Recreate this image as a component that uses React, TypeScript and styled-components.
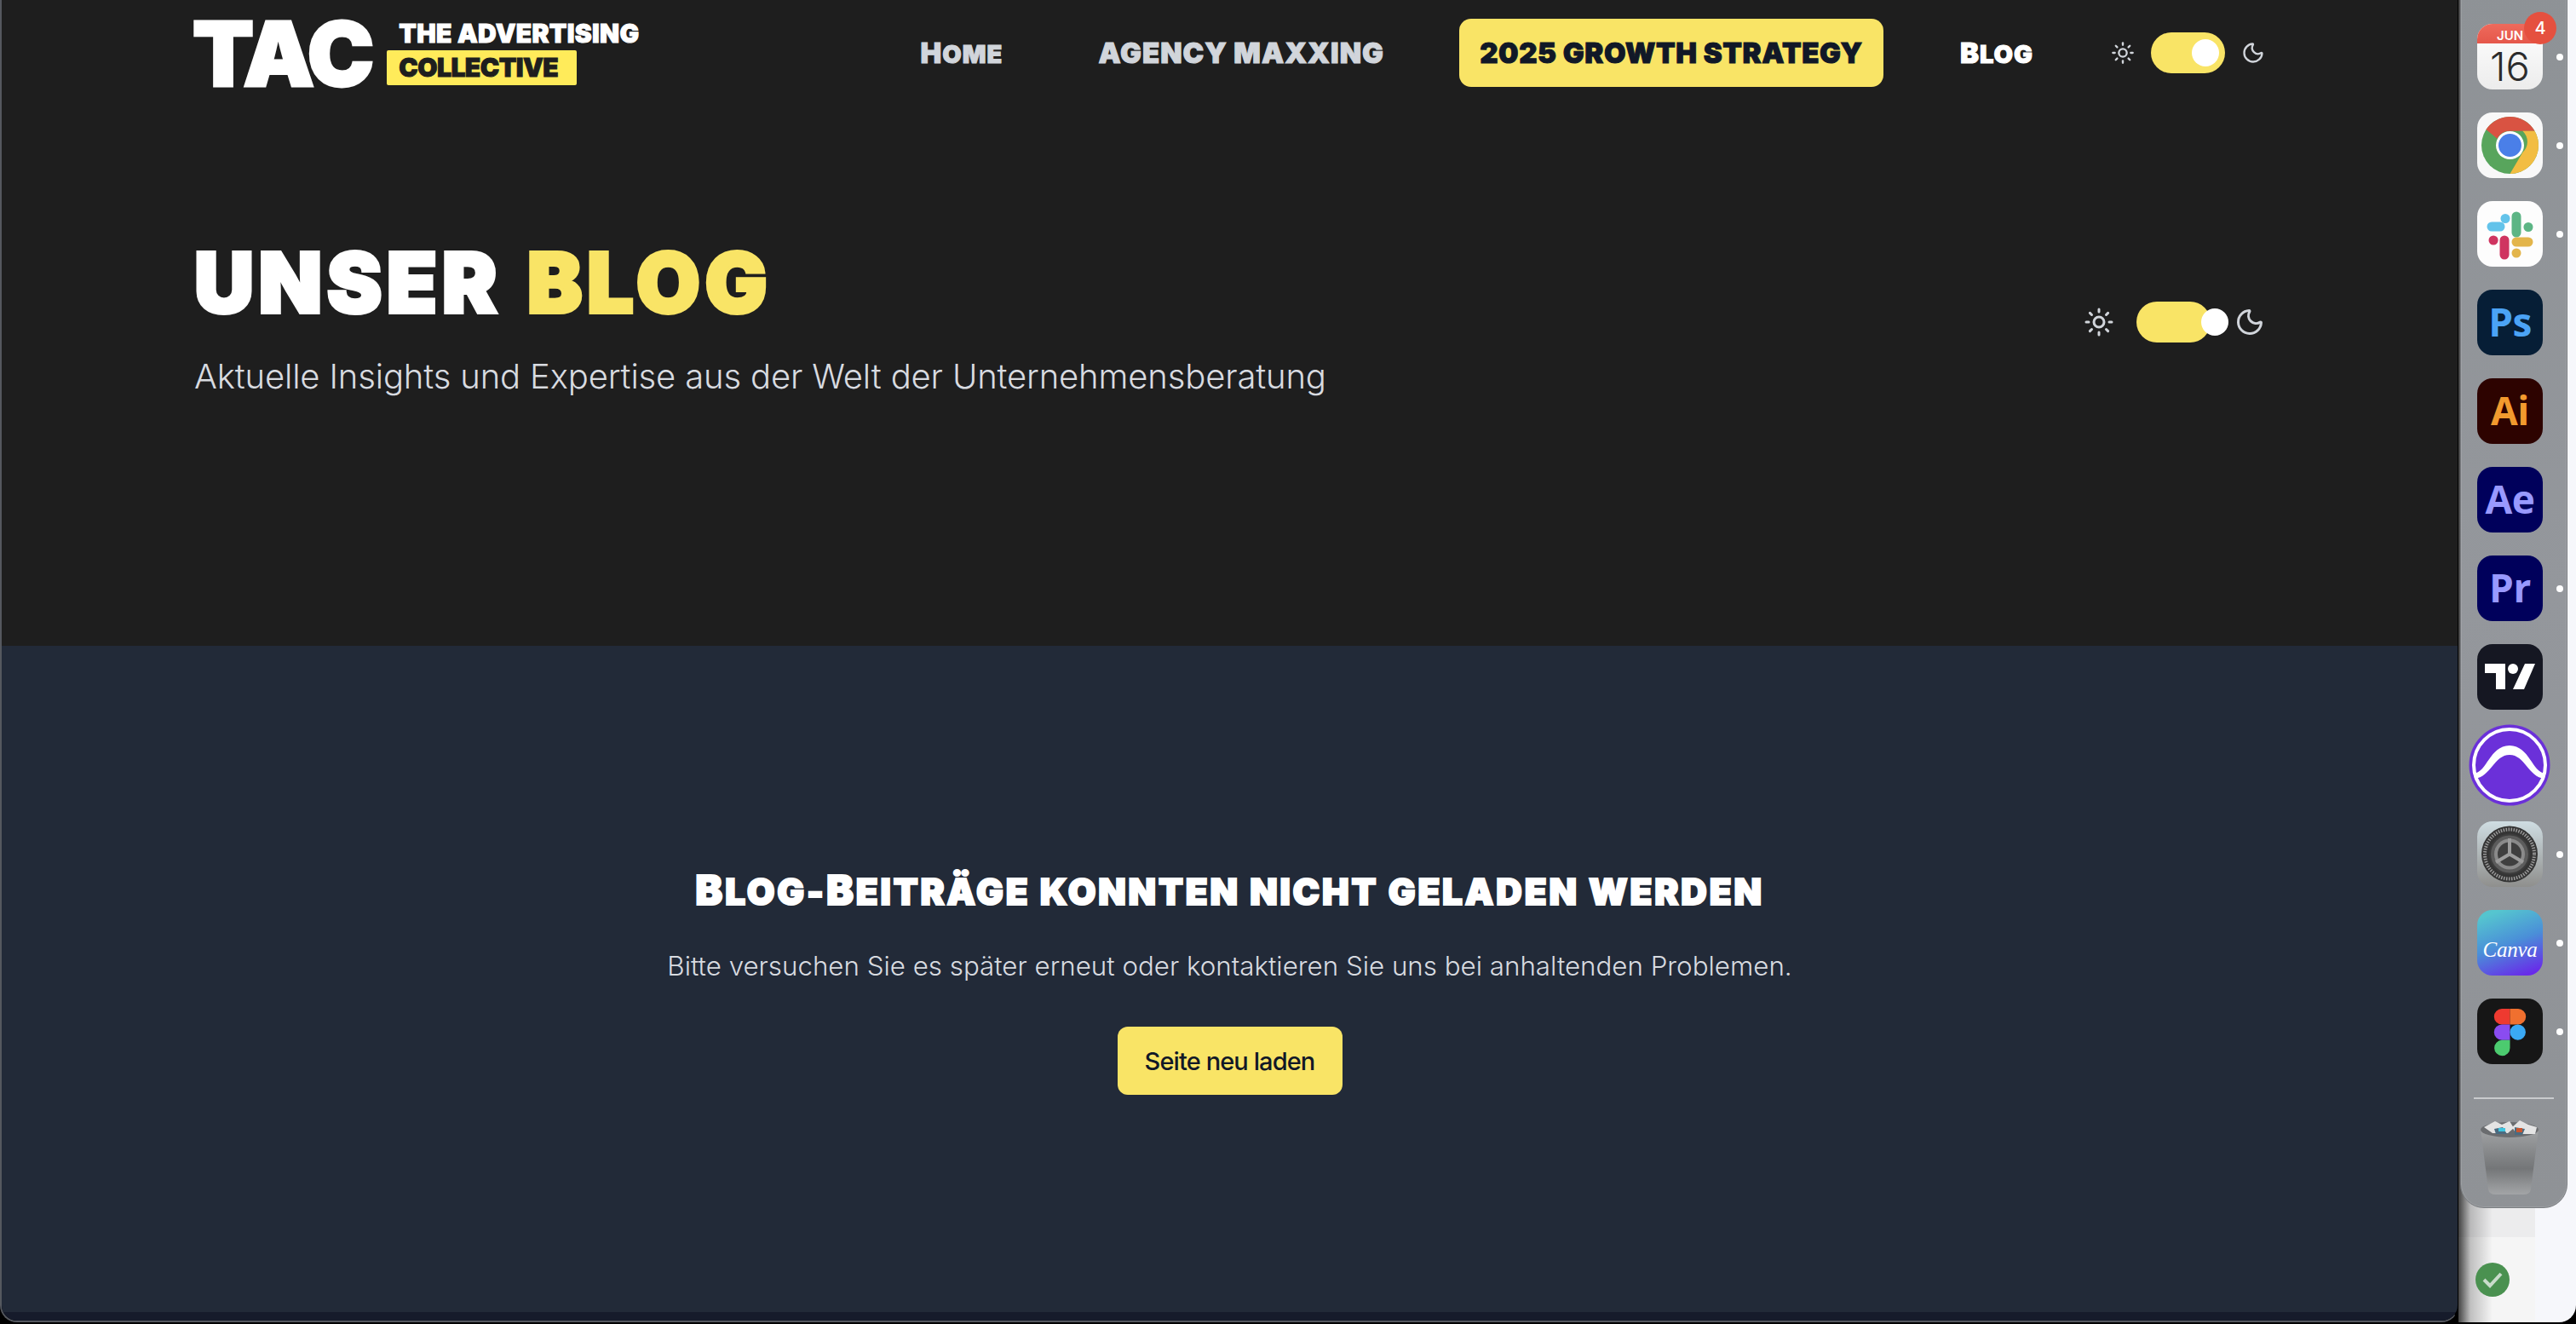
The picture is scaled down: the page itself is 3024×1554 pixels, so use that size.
import React from 'react';
import styled, { createGlobalStyle } from 'styled-components';
import { Sun, Moon } from 'lucide-react';

const heavy = `"Inter", "Liberation Sans", sans-serif`;
const yellow = '#f9e466';

const Global = createGlobalStyle`
  html, body { margin: 0; padding: 0; background: #000; }
  body { font-family: "Inter", "Liberation Sans", sans-serif; overflow: hidden; }
`;

const Screen = styled.div`
  width: 3024px;
  height: 1554px;
  display: flex;
  align-items: flex-start;
  position: relative;
  overflow: hidden;
  background: #000;
`;

const Browser = styled.div`
  width: 2886px;
  height: 1552px;
  flex: none;
  display: flex;
  flex-direction: column;
  border-radius: 0 0 20px 20px;
  border: 2px solid #55585f;
  border-top: 0;
  border-right: 1px solid #000;
  box-sizing: border-box;
  overflow: hidden;
`;

const Desktop = styled.div`
  flex: 1;
  height: 1552px;
  border-radius: 0 0 20px 0;
  background:
    linear-gradient(90deg, rgba(0, 0, 0, 0.72) 0, rgba(0, 0, 0, 0.22) 14px, rgba(0, 0, 0, 0) 40px),
    linear-gradient(90deg, transparent 90px, #f6f7fb 90px),
    linear-gradient(180deg, #ececed 0 1452px, #f5f5f5 1452px);
`;

const Hero = styled.section`
  height: 758px;
  flex: none;
  background: #1e1e1e;
  box-sizing: border-box;
  padding: 0 226px 0 226px;
  display: flex;
  flex-direction: column;
`;

const Nav = styled.nav`
  height: 124px;
  flex: none;
  display: flex;
  align-items: center;
  justify-content: space-between;
`;

const Logo = styled.div`
  display: flex;
  align-items: center;
  gap: 18px;
  margin-left: -2px;
`;

const LogoMark = styled.span`
  font: 900 105px/1 ${heavy};
  color: #fff;
  letter-spacing: -3px;
  -webkit-text-stroke: 3px #fff;
`;

const LogoText = styled.div`
  display: flex;
  flex-direction: column;
  align-items: flex-start;
  gap: 5px;
`;

const LogoLine = styled.span`
  font: 900 30px/1 ${heavy};
  color: #fff;
  padding-left: 14px;
  letter-spacing: 0.3px;
  -webkit-text-stroke: 1px #fff;
`;

const LogoTag = styled.span`
  font: 900 30px/41px ${heavy};
  color: #1e1e1e;
  background: #ffeb5a;
  border-radius: 2px;
  width: 223px;
  height: 41px;
  padding-left: 14px;
  box-sizing: border-box;
  letter-spacing: -0.5px;
  -webkit-text-stroke: 1px #1e1e1e;
`;

const Links = styled.div`
  display: flex;
  align-items: center;
`;

const NavLink = styled.a<{ $color: string; $gap: number }>`
  font: 900 33px/1 ${heavy};
  color: ${(p) => p.$color};
  margin-right: ${(p) => p.$gap}px;
  letter-spacing: 1px;
  white-space: nowrap;
  -webkit-text-stroke: 1px currentColor;
`;

const Lower = styled.span`
  font-size: 0.88em;
`;

const NavCta = styled.a`
  font: 900 33px/80px ${heavy};
  height: 80px;
  width: 498px;
  text-align: center;
  background: ${yellow};
  color: #111827;
  border-radius: 14px;
  margin-right: 90px;
  white-space: nowrap;
  letter-spacing: 0.6px;
  -webkit-text-stroke: 1px #111827;
`;

const Toggle = styled.div`
  display: flex;
  align-items: center;
`;

const HeroToggle = styled(Toggle)`
  margin-top: 11px;
`;

const Track = styled.div<{ $over?: boolean }>`
  width: 87px;
  height: 48px;
  border-radius: 24px;
  background: ${yellow};
  position: relative;
  margin: 0 ${(p) => (p.$over ? 28 : 19)}px 0 ${(p) => (p.$over ? 26 : 19)}px;
`;

const Knob = styled.div<{ $left: number }>`
  position: absolute;
  top: 8px;
  left: ${(p) => p.$left}px;
  width: 32px;
  height: 32px;
  border-radius: 50%;
  background: #fff;
`;

const HeroBody = styled.div`
  display: flex;
  align-items: center;
  justify-content: space-between;
  margin-top: 159px;
`;

const Title = styled.h1`
  font: 900 97px/1 ${heavy};
  margin: 0;
  color: #fff;
  letter-spacing: 5.500px;
  word-spacing: 5px;
  -webkit-text-stroke: 4px currentColor;
`;

const Accent = styled.span`
  color: ${yellow};
`;

const Sub = styled.p`
  font: 300 40px/1 ${heavy};
  color: #d8dbe0;
  margin: 42px 0 0;
  letter-spacing: -0.15px;
`;

const ErrorPanel = styled.section`
  flex: 1;
  background: #222a38;
  display: flex;
  flex-direction: column;
  align-items: center;
  padding-top: 263px;
`;

const PanelFoot = styled.div`
  height: 10px;
  flex: none;
  background: #161b2b;
`;

const ErrorTitle = styled.h2`
  font: 900 48px/1 ${heavy};
  color: #fff;
  margin: 0;
  white-space: nowrap;
  letter-spacing: 2.850px;
  -webkit-text-stroke: 2px #fff;
`;

const ErrorText = styled.p`
  font: 300 31.3px/1 ${heavy};
  color: #d8dbe0;
  margin: 50px 0 0;
`;

const Reload = styled.button`
  margin-top: 55px;
  width: 264px;
  height: 80px;
  border: 0;
  border-radius: 12px;
  background: ${yellow};
  color: #111827;
  font: 500 29px/1 ${heavy};
  letter-spacing: -0.9px;
`;

const Dock = styled.aside`
  position: absolute;
  left: 2888px;
  top: -20px;
  width: 126px;
  height: 1438px;
  box-sizing: border-box;
  padding-top: 47px;
  border-radius: 0 0 28px 28px;
  background: linear-gradient(180deg, #8e9296, #94979c 50%, #8f9296);
  border: 1px solid #7a7d81;
  box-shadow: inset 0 0 0 1px rgba(255, 255, 255, 0.12);
  display: flex;
  flex-direction: column;
  align-items: flex-start;
`;

const Slot = styled.div`
  width: 77px;
  height: 77px;
  margin: 0 0 27px 19px;
  flex: none;
  position: relative;
`;

const Tile = styled.div<{ $bg: string; $fg?: string }>`
  width: 77px;
  height: 77px;
  border-radius: 18px;
  background: ${(p) => p.$bg};
  color: ${(p) => p.$fg || '#fff'};
  font: 700 46px/75px "Open Sans", sans-serif;
  text-align: center;
  overflow: hidden;
  letter-spacing: -0.5px;
`;

const Dot = styled.i`
  position: absolute;
  left: 93px;
  top: 35px;
  width: 8px;
  height: 8px;
  border-radius: 50%;
  background: #fff;
`;

const Badge = styled.span`
  position: absolute;
  left: 55px;
  top: -14px;
  width: 38px;
  height: 38px;
  border-radius: 50%;
  background: #e5503f;
  color: #fff;
  font: 500 20px/38px "Inter", sans-serif;
  text-align: center;
`;

const CalHead = styled.div`
  height: 23px;
  background: linear-gradient(#ee6a5c, #e5574a);
  color: #fff;
  font: 600 15px/27px "Inter", sans-serif;
  letter-spacing: 0;
  overflow: hidden;
`;

const CalDay = styled.div`
  color: #2b2b2b;
  font: 300 47px/54px "Inter", sans-serif;
  letter-spacing: 0;
`;

const CanvaWord = styled.span`
  font: italic 400 25px/74px "Liberation Serif", serif;
  letter-spacing: -0.3px;
`;

const DockRule = styled.div`
  width: 94px;
  height: 2px;
  background: #c9cbcd;
  margin: 12px 0 24px 15px;
`;

const TrashSlot = styled.div`
  margin-left: 23px;
  width: 68px;
  height: 89px;
`;

const Done = styled.div`
  position: absolute;
  left: 2906px;
  top: 1482px;
  width: 40px;
  height: 40px;
  border-radius: 50%;
  background: #4a9150;
  display: flex;
  align-items: center;
  justify-content: center;
`;

const ChromeIcon = () => (
  <svg viewBox="0 0 77 77" width="77" height="77">
    <circle cx="38.5" cy="38.5" r="33.5" fill="#58a55c" />
    <path d="M38.5 5a33.5 33.5 0 0 1 29 16.7H38.5a17 17 0 0 0-15 9L10.500 20A33.500 33.500 0 0 1 38.500 5z" fill="#d95342" />
    <path d="M67.500 21.700A33.500 33.500 0 0 1 38.500 72l14.800-25a17 17 0 0 0 0-25.300z" fill="#f2bd42" />
    <circle cx="38.500" cy="38.500" r="16.500" fill="#fff" />
    <circle cx="38.500" cy="38.500" r="13.500" fill="#4a7fe8" />
  </svg>
);

const SlackIcon = () => (
  <svg viewBox="0 0 77 77" width="77" height="77">
    <g fill="none" strokeLinecap="round" strokeWidth="11">
      <path d="M27 30H17" stroke="#63c3ea" />
      <path d="M33 20.500v.1" stroke="#63c3ea" />
      <path d="M46 18v19" stroke="#5cb585" />
      <path d="M60 30.500v.1" stroke="#5cb585" />
      <path d="M46 48h14" stroke="#e3b54b" />
      <path d="M46 61v.1" stroke="#e3b54b" />
      <path d="M32 46v17" stroke="#cf3460" />
      <path d="M19 46h.1" stroke="#cf3460" />
    </g>
  </svg>
);

const TradingViewIcon = () => (
  <svg viewBox="0 0 77 77" width="77" height="77">
    <path d="M9 23h24v30H22V34H9z" fill="#fff" />
    <circle cx="42" cy="29" r="6" fill="#fff" />
    <path d="M56 23h12L55 53H42z" fill="#fff" />
  </svg>
);

const ProToolsIcon = () => (
  <svg viewBox="0 0 96 96" width="96" height="96" style={{ position: 'absolute', left: -10, top: -10 }}>
    <circle cx="48" cy="48" r="47.500" fill="#6b30d9" />
    <circle cx="48" cy="48" r="42" fill="none" stroke="#fff" strokeWidth="4" />
    <path d="M6 58c16-2 18-32 42-33 24 1 26 31 42 33l-1 6C70 62 66 36 48 36 30 36 26 62 7 64z" fill="#fff" />
  </svg>
);

const SettingsIcon = () => (
  <svg viewBox="0 0 77 77" width="77" height="77">
    <defs>
      <linearGradient id="setBg" x1="0" y1="0" x2="0" y2="1">
        <stop offset="0" stopColor="#cfdde2" />
        <stop offset="1" stopColor="#8f8f8d" />
      </linearGradient>
    </defs>
    <rect width="77" height="77" rx="18" fill="url(#setBg)" />
    <circle cx="38" cy="38.500" r="33" fill="#343434" />
    <circle cx="38" cy="38.500" r="29" fill="none" stroke="#9a9a9a" strokeWidth="4" strokeDasharray="1.500 1.500" />
    <circle cx="38" cy="38.500" r="23" fill="#5c5c5c" stroke="#3c3c3c" strokeWidth="2" />
    <circle cx="38" cy="38.500" r="18" fill="#8a8a8a" />
    <circle cx="38" cy="38.500" r="14" fill="#3f3f3f" />
    <path d="M38 38.500V20M38 38.500L22 48M38 38.500L54 48" stroke="#9c9c9c" strokeWidth="4" />
  </svg>
);

const FigmaIcon = () => (
  <svg viewBox="0 0 77 77" width="77" height="77">
    <path d="M38.500 12H29a9.200 9.200 0 0 0 0 18.400h9.500z" fill="#ee3a30" />
    <path d="M38.500 12H48a9.200 9.200 0 0 1 0 18.400h-9.500z" fill="#f0702f" />
    <path d="M38.500 30.400H29a9.200 9.200 0 0 0 0 18.400h9.500z" fill="#8a4cf0" />
    <circle cx="47.700" cy="39.600" r="9.200" fill="#3aa9f5" />
    <path d="M38.500 48.800H29a9.200 9.200 0 1 0 9.500 9.200z" fill="#4ccb6f" />
  </svg>
);

const TrashIcon = () => (
  <svg viewBox="0 0 68 89" width="68" height="89">
    <defs>
      <linearGradient id="bin" x1="0" y1="0" x2="0" y2="1">
        <stop offset="0" stopColor="#a0a2a4" />
        <stop offset="0.6" stopColor="#747678" />
        <stop offset="1" stopColor="#a3a5a7" />
      </linearGradient>
    </defs>
    <path d="M0 12h68L59 82q-1 6-9 6H18q-8 0-9-6z" fill="url(#bin)" />
    <ellipse cx="34" cy="12" rx="34" ry="9" fill="#6a6c6f" />
    <path d="M4 9l13-7 8 4 9-4 5 8-7 6H14zM37 9l9-8 10 5 10 3-2 8H42z" fill="#e4e4e4" />
    <path d="M16 11l10-2 5 8H18zM40 9l12 2-3 7H40z" fill="#4b6b80" />
    <path d="M21 10h8v4h-8z" fill="#3fc5e0" />
    <path d="M42 10h7v5h-7z" fill="#c8552f" />
  </svg>
);

const apps: { key: string; dot?: boolean; node: React.ReactNode }[] = [
  { key: 'cal', dot: true, node: <Tile $bg="linear-gradient(#fff,#ececec)" $fg="#222"><CalHead>JUN</CalHead><CalDay>16</CalDay></Tile> },
  { key: 'chrome', dot: true, node: <Tile $bg="#f8f8f8"><ChromeIcon /></Tile> },
  { key: 'slack', dot: true, node: <Tile $bg="#fdfdfd"><SlackIcon /></Tile> },
  { key: 'ps', node: <Tile $bg="#061e36" $fg="#4ba3f5">Ps</Tile> },
  { key: 'ai', node: <Tile $bg="#2d0300" $fg="#f29a2e">Ai</Tile> },
  { key: 'ae', node: <Tile $bg="#00005b" $fg="#9999ff">Ae</Tile> },
  { key: 'pr', dot: true, node: <Tile $bg="#00005b" $fg="#9999ff">Pr</Tile> },
  { key: 'tv', node: <Tile $bg="#151722"><TradingViewIcon /></Tile> },
  { key: 'pt', node: <ProToolsIcon /> },
  { key: 'set', dot: true, node: <SettingsIcon /> },
  { key: 'canva', dot: true, node: <Tile $bg="linear-gradient(160deg,#55c5cf 10%,#4a8fd8 50%,#6a25ea 95%)"><CanvaWord>Canva</CanvaWord></Tile> },
  { key: 'figma', dot: true, node: <Tile $bg="#161616"><FigmaIcon /></Tile> },
];

export default function App() {
  return (
    <Screen>
      <Global />
      <Browser>
        <Hero>
          <Nav>
            <Logo>
              <LogoMark>TAC</LogoMark>
              <LogoText>
                <LogoLine>THE ADVERTISING</LogoLine>
                <LogoTag>COLLECTIVE</LogoTag>
              </LogoText>
            </Logo>
            <Links>
              <NavLink $color="#d1d5db" $gap={112}>H<Lower>OME</Lower></NavLink>
              <NavLink $color="#d1d5db" $gap={88}>AGENCY MAXXING</NavLink>
              <NavCta>2025 GROWTH STRATEGY</NavCta>
              <NavLink $color="#fff" $gap={91}>B<Lower>LOG</Lower></NavLink>
              <Toggle>
                <Sun size={28} color="#d1d5db" />
                <Track>
                  <Knob $left={48} />
                </Track>
                <Moon size={28} color="#d1d5db" />
              </Toggle>
            </Links>
          </Nav>
          <HeroBody>
            <div>
              <Title>UNSER <Accent>BLOG</Accent></Title>
              <Sub>Aktuelle Insights und Expertise aus der Welt der Unternehmensberatung</Sub>
            </div>
            <HeroToggle>
              <Sun size={36} color="#d1d5db" />
              <Track $over>
                <Knob $left={76} />
              </Track>
              <Moon size={36} color="#d1d5db" />
            </HeroToggle>
          </HeroBody>
        </Hero>
        <ErrorPanel>
          <ErrorTitle>B<Lower>LOG-</Lower>B<Lower>EITRÄGE KONNTEN NICHT GELADEN WERDEN</Lower></ErrorTitle>
          <ErrorText>Bitte versuchen Sie es später erneut oder kontaktieren Sie uns bei anhaltenden Problemen.</ErrorText>
          <Reload>Seite neu laden</Reload>
        </ErrorPanel>
        <PanelFoot />
      </Browser>
      <Desktop />
      <Dock>
        {apps.map((a) => (
          <Slot key={a.key}>
            {a.node}
            {a.key === 'cal' && <Badge>4</Badge>}
            {a.dot && <Dot />}
          </Slot>
        ))}
        <DockRule />
        <TrashSlot>
          <TrashIcon />
        </TrashSlot>
      </Dock>
      <Done>
        <svg width="26" height="22" viewBox="0 0 26 22" fill="none">
          <path d="M3 11l7 7L23 4" stroke="#c9dccb" strokeWidth="4" />
        </svg>
      </Done>
    </Screen>
  );
}
